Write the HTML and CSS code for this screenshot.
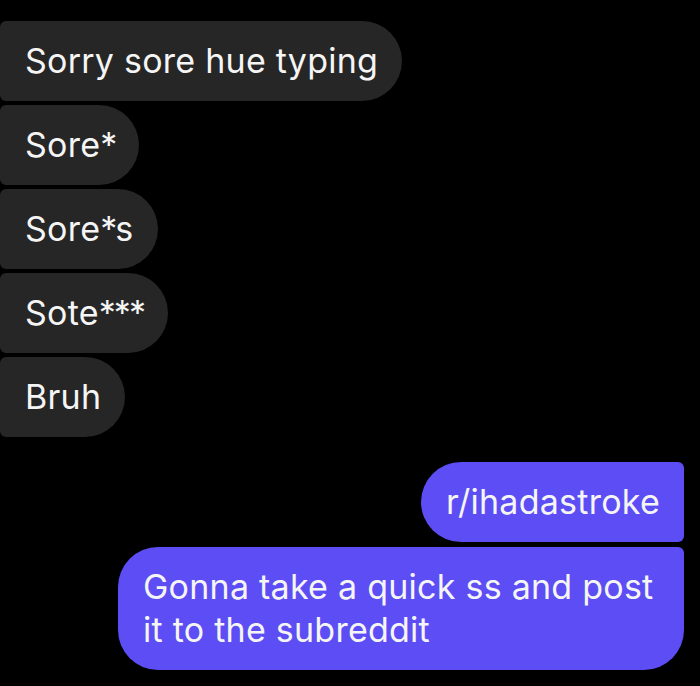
FILE: index.html
```html
<!DOCTYPE html>
<html>
<head>
<meta charset="utf-8">
<link rel="stylesheet" href="styles.css">
</head>
<body>
<div class="thread">
  <div class="msg in">Sorry sore hue typing</div>
  <div class="msg in">Sore<span class="ast">*</span></div>
  <div class="msg in">Sore<span class="ast">*</span>s</div>
  <div class="msg in">Sote<span class="ast">***</span></div>
  <div class="msg in">Bruh</div>
  <div class="out-group">
    <div class="msg out first">r/ihadastroke</div>
    <div class="msg out last">Gonna take a quick ss and post it to the subreddit</div>
  </div>
</div>
</body>
</html>
```
FILE: styles.css
```css
html, body {
  margin: 0;
  padding: 0;
  background: #000;
}
body {
  font-family: Inter, "Noto Sans", sans-serif;
  color: #f5f5f5;
}
.thread {
  display: flex;
  flex-direction: column;
  gap: 4px;
  padding: 21px 16px 0 0;
}
.msg {
  font-size: 34px;
  line-height: 43px;
  letter-spacing: 0.25px;
  padding: 18px 24px 19px 25px;
  box-sizing: border-box;
}
.ast {
  letter-spacing: -2px;
}
.in {
  align-self: flex-start;
  background: #262626;
  border-radius: 6px 40px 40px 6px;
}
.out-group {
  display: flex;
  flex-direction: column;
  align-items: flex-end;
  gap: 5px;
  margin-top: 21px;
}
.out {
  background: #5c4df5;
  max-width: 566px;
}
.out.first {
  border-radius: 40px 6px 6px 40px;
}
.out.last {
  border-radius: 40px 6px 40px 40px;
}
```
